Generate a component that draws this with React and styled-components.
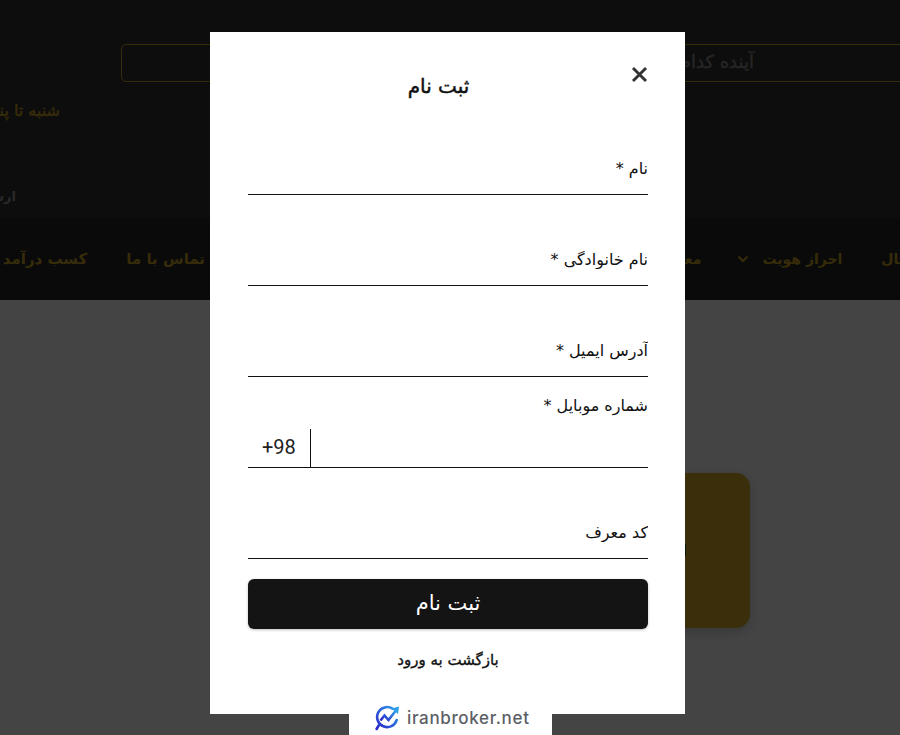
import React from "react";
import styled, { createGlobalStyle } from "styled-components";

const FONT = `"DejaVu Sans", "Noto Sans", sans-serif`;

const GlobalStyle = createGlobalStyle`
  html, body {
    margin: 0;
    height: 100%;
    background: #fcfcfc;
    overflow: hidden;
  }
  * { box-sizing: border-box; }
`;

const App = () => {
  return (
    <Page>
      <GlobalStyle />
      <Header>
        <SearchBox>آینده کدام ارز</SearchBox>
        <Hours>شنبه تا پنجشنبه</Hours>
        <Ticket>ارسال تیکت</Ticket>
      </Header>

      <Nav>
        <NavGroup $side="left">
          <NavItem>تماس با ما</NavItem>
          <NavItem>کسب درآمد</NavItem>
        </NavGroup>
        <NavGroup $side="right">
          <NavItem>پرتال</NavItem>
          <NavItem>
            احراز هویت
            <Chevron viewBox="0 0 12 8">
              <path d="M1.5 1.5 6 6l4.5-4.5" />
            </Chevron>
          </NavItem>
          <NavItem>معاملات</NavItem>
        </NavGroup>
      </Nav>

      <Main>
        <PromoCard>احراز</PromoCard>
      </Main>

      <Overlay>
        <Modal dir="rtl">
          <TitleRow>
            <CloseButton aria-label="بستن">
              <svg viewBox="0 0 17 17" width="17" height="17">
                <path d="M2 2l13 13M15 2 2 15" stroke="#333" strokeWidth="2.9" fill="none" />
              </svg>
            </CloseButton>
            <Title>ثبت نام</Title>
          </TitleRow>

          <Field>
            <Input placeholder="نام *" />
          </Field>
          <Field>
            <Input placeholder="نام خانوادگی *" />
          </Field>
          <Field>
            <Input placeholder="آدرس ایمیل *" />
          </Field>
          <PhoneField>
            <PhoneLabel>شماره موبایل *</PhoneLabel>
            <PhoneRow>
              <Input type="tel" />
              <Prefix>+98</Prefix>
            </PhoneRow>
          </PhoneField>
          <Field>
            <Input placeholder="کد معرف" />
          </Field>

          <Submit>ثبت نام</Submit>
          <BackLink href="#">بازگشت به ورود</BackLink>
        </Modal>
      </Overlay>

      <Badge>
        <svg viewBox="0 0 26 26" width="26" height="26">
          <defs>
            <linearGradient id="logoGrad" x1="0" y1="1" x2="1" y2="0">
              <stop offset="0" stopColor="#2b24c9" />
              <stop offset="1" stopColor="#2f9fe8" />
            </linearGradient>
          </defs>
          <path
            d="M18.5 3.6A10 10 0 1 0 22.7 15 M5 20 2.6 24"
            stroke="url(#logoGrad)"
            strokeWidth="2.6"
            strokeLinecap="round"
            fill="none"
          />
          <path
            d="M6.5 15.5 10.5 10.5 14.5 15 21.5 6"
            stroke="url(#logoGrad)"
            strokeWidth="2.6"
            fill="none"
          />
          <path d="M17.5 3.5 25 1.5 24 9z" fill="#2f9fe8" />
        </svg>
        <BadgeText>iranbroker.net</BadgeText>
      </Badge>
    </Page>
  );
};

export default App;

const Page = styled.div`
  width: 900px;
  height: 735px;
  overflow: hidden;
  font-family: ${FONT};
  background: #fcfcfc;
`;

const Header = styled.header`
  height: 218px;
  padding-top: 44px;
  background: #303030;
`;

const SearchBox = styled.div`
  width: 800px;
  height: 38px;
  margin-left: 121px;
  padding-right: 166px;
  direction: rtl;
  border: 1px solid #c9a227;
  border-radius: 5px;
  color: #8a8a8a;
  font-size: 18px;
  -webkit-text-stroke: 0.4px #8a8a8a;
  line-height: 34px;
  white-space: nowrap;
`;

const Hours = styled.div`
  width: 60px;
  margin-top: 19px;
  direction: rtl;
  color: #c9a227;
  font-size: 16px;
  -webkit-text-stroke: 0.4px #c9a227;
  line-height: 20px;
  white-space: nowrap;
`;

const Ticket = styled.div`
  width: 16px;
  margin-top: 67px;
  direction: rtl;
  color: #999;
  font-size: 13px;
  font-weight: 700;
  line-height: 18px;
  white-space: nowrap;
`;

const Nav = styled.nav`
  height: 82px;
  display: flex;
  justify-content: space-between;
  align-items: center;
  background: #262626;
`;

const NavGroup = styled.div`
  direction: rtl;
  display: flex;
  flex: none;
  gap: 39px;
  font-size: ${({ $side }) => ($side === "left" ? "15px" : "14px")};
  width: ${({ $side }) => ($side === "left" ? "205px" : "auto")};
  margin-right: ${({ $side }) => ($side === "right" ? "-18px" : "0")};
`;

const NavItem = styled.span`
  flex: none;
  display: inline-flex;
  align-items: center;
  gap: 13px;
  color: #c9a227;
  font-weight: 700;
  white-space: nowrap;
`;

const Chevron = styled.svg`
  width: 12px;
  height: 8px;
  margin-left: -3px;
  fill: none;
  stroke: #c9a227;
  stroke-width: 2;
`;

const Main = styled.main`
  padding: 173px 0 0 300px;
`;

const PromoCard = styled.div`
  width: 450px;
  height: 155px;
  padding-right: 63px;
  direction: rtl;
  border-radius: 14px;
  background: #d7ae25;
  box-shadow: 0 4px 14px rgba(0, 0, 0, 0.2);
  color: #000;
  font-size: 16px;
  line-height: 155px;
`;

const Overlay = styled.div`
  position: fixed;
  inset: 0;
  padding: 32px 0 0 210px;
  background: rgba(0, 0, 0, 0.73);
`;

const Modal = styled.div`
  width: 475px;
  height: 682px;
  padding: 0 37px 0 38px;
  background: #fff;
  color: #111;
`;

const TitleRow = styled.div`
  height: 72px;
  padding-top: 34px;
  display: flex;
  align-items: flex-start;
`;

const CloseButton = styled.button`
  flex: none;
  width: 19px;
  height: 17px;
  padding: 0;
  border: 0;
  background: none;
  display: flex;
`;

const Title = styled.h2`
  flex: 1;
  margin: 6px 0 0;
  text-align: center;
  font-size: 20px;
  font-weight: 400;
  -webkit-text-stroke: 0.45px #111;
  line-height: 28px;
`;

const Field = styled.div`
  height: 91px;
  padding-top: 38px;
  border-bottom: 1px solid #111;
`;

const Input = styled.input`
  width: 100%;
  height: 100%;
  padding: 0;
  border: 0;
  outline: 0;
  background: transparent;
  font-family: ${FONT};
  font-size: 16px;
  color: #111;

  &::placeholder {
    color: #111;
    opacity: 1;
  }
`;

const PhoneField = styled.div`
  height: 91px;
  border-bottom: 1px solid #111;
`;

const PhoneLabel = styled.div`
  height: 52px;
  padding-top: 17px;
  font-size: 16px;
  line-height: 24px;
`;

const PhoneRow = styled.div`
  height: 38px;
  display: flex;
`;

const Prefix = styled.span`
  flex: none;
  width: 63px;
  padding-left: 14px;
  direction: ltr;
  border-right: 1px solid #111;
  font-family: Roboto, sans-serif;
  font-size: 20px;
  line-height: 36px;
  color: #222;
`;

const Submit = styled.button`
  width: 100%;
  height: 50px;
  margin-top: 20px;
  padding: 0 0 2px;
  border: 0;
  border-radius: 6px;
  background: #141414;
  box-shadow: 0 1px 3px rgba(0, 0, 0, 0.25);
  color: #fff;
  font-family: ${FONT};
  font-size: 21px;
`;

const BackLink = styled.a`
  display: block;
  margin-top: 19px;
  text-align: center;
  color: #111;
  font-size: 15px;
  -webkit-text-stroke: 0.35px #111;
  line-height: 24px;
  text-decoration: none;
`;

const Badge = styled.div`
  position: fixed;
  left: 349px;
  bottom: 0;
  width: 203px;
  height: 35px;
  padding-left: 25px;
  display: flex;
  align-items: center;
  gap: 7px;
  background: #fff;
`;

const BadgeText = styled.span`
  font-family: Inter, sans-serif;
  font-size: 17px;
  font-weight: 500;
  letter-spacing: 0.65px;
  color: #5c5f66;
`;
